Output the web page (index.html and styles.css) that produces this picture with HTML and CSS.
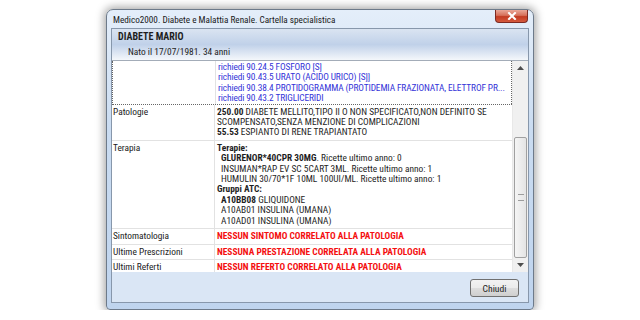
FILE: index.html
```html
<!DOCTYPE html>
<html>
    <head>
        <meta name="viewport" content="width=device-width">
        <title>Medico2000</title>
        <link rel="stylesheet" href="styles.css">
    </head>
    <body>
        <div class="window">
            <div class="titlebar">
                <div class="title">Medico2000. Diabete e Malattia Renale. Cartella specialistica</div>
                <div class="close">
                    <svg width="10" height="8" viewBox="0 0 10 8"><path d="M2 1 L8 7 M8 1 L2 7" stroke="#fff" stroke-width="2" stroke-linecap="square"/></svg>
                </div>
            </div>
            <div class="client">
                <div class="header">
                    <div class="patient">DIABETE MARIO</div>
                    <div class="born">Nato il 17/07/1981. 34 anni</div>
                </div>
                <div class="grid-wrap">
                    <div class="grid">
                        <div class="row focus">
                            <div class="label"></div>
                            <div class="value blue">
                                <div>richiedi 90.24.5 FOSFORO [S]</div>
                                <div>richiedi 90.43.5 URATO (ACIDO URICO) [S]]</div>
                                <div>richiedi 90.38.4 PROTIDOGRAMMA (PROTIDEMIA FRAZIONATA, ELETTROF PR...</div>
                                <div>richiedi 90.43.2 TRIGLICERIDI</div>
                            </div>
                        </div>
                        <div class="row">
                            <div class="label">Patologie</div>
                            <div class="value">
                                <div><b>250.00</b> DIABETE MELLITO,TIPO II O NON SPECIFICATO,NON DEFINITO SE SCOMPENSATO,SENZA MENZIONE DI COMPLICAZIONI</div>
                                <div><b>55.53</b> ESPIANTO DI RENE TRAPIANTATO</div>
                            </div>
                        </div>
                        <div class="row">
                            <div class="label">Terapia</div>
                            <div class="value">
                                <div><b>Terapie:</b></div>
                                <div class="ind"><b>GLURENOR*40CPR 30MG</b>. Ricette ultimo anno: 0</div>
                                <div class="ind">INSUMAN*RAP EV SC 5CART 3ML. Ricette ultimo anno: 1</div>
                                <div class="ind">HUMULIN 30/70*1F 10ML 100UI/ML. Ricette ultimo anno: 1</div>
                                <div><b>Gruppi ATC:</b></div>
                                <div class="ind"><b>A10BB08</b> GLIQUIDONE</div>
                                <div class="ind">A10AB01 INSULINA (UMANA)</div>
                                <div class="ind">A10AD01 INSULINA (UMANA)</div>
                            </div>
                        </div>
                        <div class="row">
                            <div class="label">Sintomatologia</div>
                            <div class="value red">NESSUN SINTOMO CORRELATO ALLA PATOLOGIA</div>
                        </div>
                        <div class="row">
                            <div class="label">Ultime Prescrizioni</div>
                            <div class="value red">NESSUNA PRESTAZIONE CORRELATA ALLA PATOLOGIA</div>
                        </div>
                        <div class="row last">
                            <div class="label">Ultimi Referti</div>
                            <div class="value red">NESSUN REFERTO CORRELATO ALLA PATOLOGIA</div>
                        </div>
                    </div>
                    <div class="scrollbar">
                        <div class="arrow">
                            <svg width="7" height="4" viewBox="0 0 7 4"><path d="M0 4 L3.5 0 L7 4Z" fill="#4d4d4d"/></svg>
                        </div>
                        <div class="track">
                            <div class="thumb"><span class="grip"></span></div>
                        </div>
                        <div class="arrow">
                            <svg width="7" height="4" viewBox="0 0 7 4"><path d="M0 0 L3.5 4 L7 0Z" fill="#4d4d4d"/></svg>
                        </div>
                    </div>
                </div>
                <div class="footer">
                    <button>Chiudi</button>
                </div>
            </div>
        </div>
    </body>
</html>
```
FILE: styles.css
```css
body{
    margin:0;
    background:#fff;
    font-family:"Roboto Condensed",Roboto,sans-serif;
    font-size:9.4px;
    color:#1e1e1e;
}
.window{
    margin:9px 0 0 106px;
    width:426px;
    height:299px;
    border:1px solid #6d7a8a;
    border-radius:7px 7px 4px 4px;
    background:linear-gradient(#e4eefa,#cadcf1 40%,#bfd4ee);
    box-shadow:0 0 9px 2px rgba(0,0,0,.35);
    display:flex;
    flex-direction:column;
}
.titlebar{
    height:18px;
    display:flex;
    align-items:flex-start;
    padding:0 5px 0 6px;
}
.title{
    font-size:9.2px;
    color:#1a1a1a;
    padding-top:4px;
}
.close{
    margin-left:auto;
    width:31px;
    height:12px;
    border:1px solid #7c2a22;
    border-top:none;
    border-radius:0 0 4px 4px;
    background:linear-gradient(#eaa898,#d6705a 45%,#c33b22 55%,#d45a3e);
    display:flex;
    align-items:center;
    justify-content:center;
}
.client{
    margin:0 4px 6px 4px;
    flex:1;
    border:1px solid #8797ab;
    background:#dae6f5;
    display:flex;
    flex-direction:column;
}
.header{
    height:32px;
    box-sizing:border-box;
    background:linear-gradient(#dae4f1,#c0d1e9 50%,#f4f7fb);
    border-bottom:1px solid #a3acb8;
    padding:1px 0 0 6px;
}
.patient{font-weight:bold;font-size:10px;line-height:13px;}
.born{padding-left:10px;margin-top:2px;line-height:13px;}
.grid-wrap{
    height:211px;
    display:flex;
    background:#fff;
}
.grid{flex:1;overflow:hidden;}
.row{
    display:grid;
    grid-template-columns:103px 1fr;
    border-bottom:1px solid #e2e2e2;
}
.row.last{border-bottom:none;}
.label{
    padding:2px 0 2px 1px;
    line-height:10.4px;
    border-right:1px solid #e2e2e2;
    color:#222;
}
.value{
    padding:2px 2px 2px 2px;
    line-height:10.4px;
    min-width:0;
}
.focus{border:1px dotted #666;border-top:none;border-right:none;}
.focus .label{padding-left:0;}
.focus .value{padding-top:1px;padding-bottom:0;border-right:1px dotted #666;}
.ind{padding-left:4px;}
.blue{color:#3434d8;letter-spacing:-0.12px;}
.blue div{white-space:nowrap;overflow:hidden;}
.red{color:#f40f0f;font-weight:bold;}
.scrollbar{
    width:15px;
    background:#f0f0f0;
    border-left:1px solid #e8e8e8;
    display:flex;
    flex-direction:column;
}
.arrow{height:15px;display:flex;align-items:center;justify-content:center;}
.track{flex:1;padding-top:61px;}
.thumb{
    height:119px;
    margin:0 1px;
    border:1px solid #a0a0a0;
    border-radius:2px;
    background:linear-gradient(90deg,#f5f5f5,#e4e4e4);
    display:flex;
    align-items:center;
    justify-content:center;
}
.grip{width:6px;height:7px;border-top:1px solid #9c9c9c;border-bottom:1px solid #9c9c9c;box-sizing:border-box;}
.footer{
    flex:1;
    display:flex;
    justify-content:flex-end;
    align-items:flex-start;
    padding:7px 9px 0 0;
}
button{
    width:49px;
    height:18px;
    font-family:"Roboto Condensed",Roboto,sans-serif;
    font-size:9.6px;
    color:#1e1e1e;
    border:1px solid #707070;
    border-radius:3px;
    background:linear-gradient(#f2f2f2,#ebebeb 50%,#dddddd 51%,#cfcfcf);
    padding:0;
}
```
